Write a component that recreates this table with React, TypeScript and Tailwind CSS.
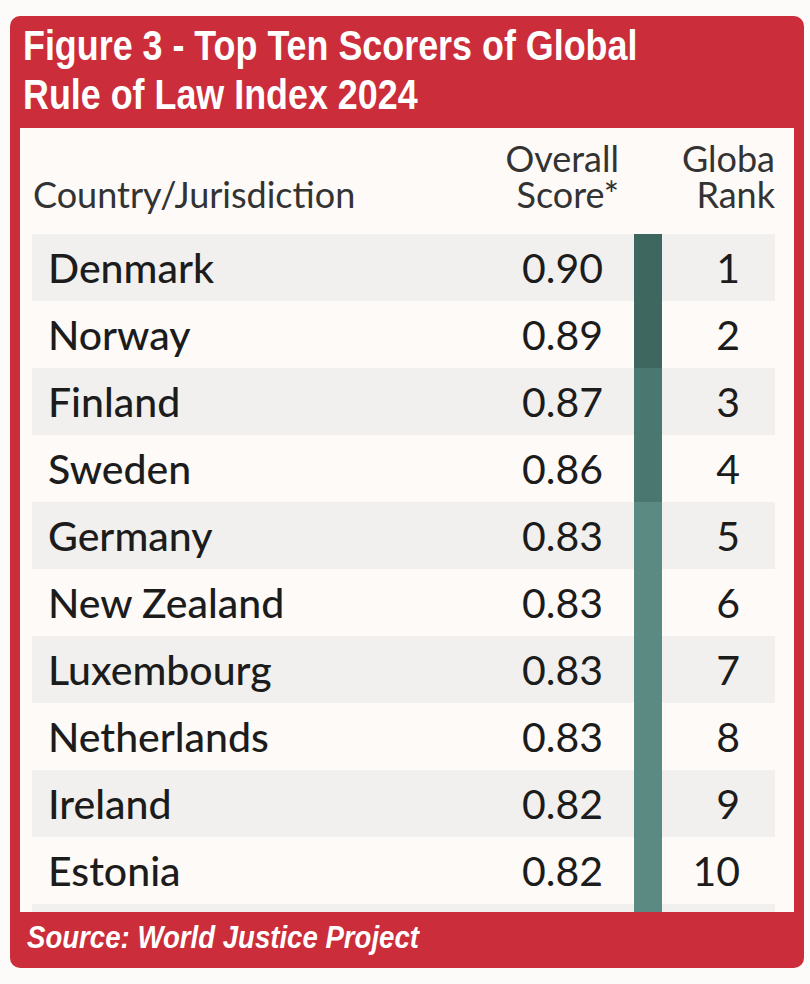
import React from 'react';

const rows = [
  { name: 'Denmark', score: '0.90', rank: 1 },
  { name: 'Norway', score: '0.89', rank: 2 },
  { name: 'Finland', score: '0.87', rank: 3 },
  { name: 'Sweden', score: '0.86', rank: 4 },
  { name: 'Germany', score: '0.83', rank: 5 },
  { name: 'New Zealand', score: '0.83', rank: 6 },
  { name: 'Luxembourg', score: '0.83', rank: 7 },
  { name: 'Netherlands', score: '0.83', rank: 8 },
  { name: 'Ireland', score: '0.82', rank: 9 },
  { name: 'Estonia', score: '0.82', rank: 10 },
];

// bar shade steps by rank group
const barColor = (i: number) =>
  i < 2 ? 'bg-[#3e6760]' : i < 4 ? 'bg-[#4a776f]' : 'bg-[#5b8a83]';

const condensed = { fontFamily: '"Liberation Sans", Arial, sans-serif' };

const App = () => {
  return (
    <div className="w-[810px] h-[984px] bg-[#fdfbf9] pt-4 pl-[10px]">
      <div className="w-[794px] h-[952px] bg-[#cc2d3a] rounded-[10px] flex flex-col">
        {/* Title */}
        <div className="h-[112px] pl-[13px] pt-[5px] text-white font-bold">
          <div
            className="text-[43px] leading-[49px] origin-left scale-x-[0.834] whitespace-nowrap"
            style={condensed}
          >
            <div>Figure 3 - Top Ten Scorers of Global</div>
            <div>Rule of Law Index 2024</div>
          </div>
        </div>

        {/* Table panel */}
        <div
          className="mx-[10px] h-[784px] bg-[#fdfaf7] flex flex-col text-[#1c1c1c]"
          style={{ fontFamily: 'Lato, "Open Sans", sans-serif' }}
        >
          {/* Header */}
          <div className="h-[106px] flex items-end pb-[22px] text-[#333] text-[36px] leading-[36px]">
            <div className="flex-1 pl-[13px]">Country/Jurisdiction</div>
            <div className="w-[200px] text-right pr-[2px]">
              <div>Overall</div>
              <div>Score*</div>
            </div>
            <div className="w-[173px] text-right pr-[19px]">
              <div>Globa</div>
              <div>Rank</div>
            </div>
          </div>

          {/* Rows */}
          <div className="ml-[12px] w-[743px] flex flex-col">
            {rows.map((r, i) => (
              <div
                key={r.name}
                className={`h-[67px] flex items-center text-[41px] ${i % 2 === 0 ? 'bg-[#f1f0ee]' : 'bg-[#fdfaf7]'}`}
              >
                <div className="flex-1 pl-[16px] font-medium">{r.name}</div>
                <div className="w-[120px] text-right pr-[31px]">{r.score}</div>
                <div className={`w-[28px] self-stretch ${barColor(i)}`} />
                <div className="w-[113px] text-right pr-[35px]">{r.rank}</div>
              </div>
            ))}
            <div className="h-[8px] flex bg-[#f1f0ee]">
              <div className="flex-1" />
              <div className="w-[28px] bg-[#5b8a83]" />
              <div className="w-[113px]" />
            </div>
          </div>
        </div>

        {/* Footer */}
        <div className="h-[56px] pl-[17px] pt-[8px] text-white font-bold italic">
          <div className="text-[31px] leading-[36px] origin-left scale-x-[0.89] whitespace-nowrap" style={condensed}>
            Source: World Justice Project
          </div>
        </div>
      </div>
    </div>
  );
};

export default App;
